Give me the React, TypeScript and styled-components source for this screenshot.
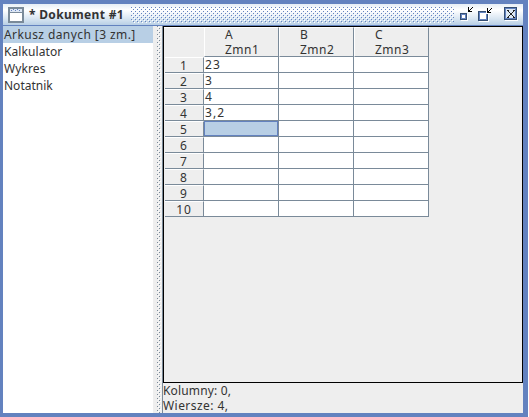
import React from "react";
import styled, { createGlobalStyle } from "styled-components";

const GlobalStyle = createGlobalStyle`
  * { box-sizing: border-box; }
  body { margin: 0; background: #fff; overflow: hidden; }
`;

const Frame = styled.div`
  width: 528px;
  height: 417px;
  background: #6382bf;
  padding: 4px 5px 4px 3px;
  display: flex;
  flex-direction: column;
  font-family: "Noto Sans", "Open Sans", sans-serif;
  font-size: 12px;
  color: #333;
`;

const TitleBar = styled.header`
  height: 22px;
  flex: none;
  display: flex;
  align-items: flex-start;
  background: linear-gradient(#e6eef6 0, #fff 6px, #dce8f3 14px, #b8cfe5 21px);
  border-bottom: 1px solid #6382bf;
`;

const DocIcon = styled.svg`
  flex: none;
  margin: 3px 0 0 5px;
`;

const Title = styled.h1`
  width: 107px;
  flex: none;
  margin: 0;
  padding-left: 5px;
  font-size: 12px;
  line-height: 21px;
  font-weight: 700;
  letter-spacing: 0.32px;
  white-space: pre;
`;

const DotField = styled.svg<{ $top?: number }>`
  flex: none;
  display: block;
  margin-top: ${(p) => p.$top ?? 0}px;
`;

const Controls = styled.svg`
  flex: none;
  display: block;
`;

const Body = styled.div`
  flex: 1;
  min-height: 0;
  display: flex;
  background: #eee;
`;

const Sidebar = styled.ul`
  width: 150px;
  flex: none;
  margin: 0;
  padding: 0;
  list-style: none;
  background: #fff;
`;

const SideItem = styled.li<{ $selected?: boolean; $spacing: number }>`
  height: 17px;
  line-height: 17px;
  padding-left: 1px;
  white-space: nowrap;
  letter-spacing: ${(p) => p.$spacing}px;
  background: ${(p) => (p.$selected ? "#b8cfe5" : "transparent")};
`;

const Splitter = styled.div`
  width: 10px;
  flex: none;
  padding-left: 4px;
  border-right: 1px solid #7a8a99;
`;

const Main = styled.main`
  width: 360px;
  display: flex;
  flex-direction: column;
`;

const Viewport = styled.div`
  height: 357px;
  flex: none;
  border: 1px solid #000;
  background: #eee;
`;

const Sheet = styled.div`
  width: 265px;
  display: grid;
  grid-template-columns: 40px repeat(3, 75px);
  grid-template-rows: 30px repeat(10, 16px);
`;

const Corner = styled.div`
  border-top: 1px solid #fff;
`;

const ColumnHead = styled.div`
  display: flow-root;
  border: 1px solid;
  border-color: #fff #7a8a99 #7a8a99 #fff;
  padding-left: 20px;
`;

const ColumnLabel = styled.div`
  margin-top: -1px;
  line-height: 15px;
  letter-spacing: 0.5px;
  white-space: pre;
`;

const RowHead = styled.div`
  margin-left: 1px;
  border: solid;
  border-width: 1px 1px 1px 0;
  border-color: #fff #7a8a99 #7a8a99;
  text-align: center;
  line-height: 15px;
  letter-spacing: 0.9px;
`;

const Cell = styled.div<{ $active?: boolean }>`
  background: ${(p) => (p.$active ? "#b8cfe5" : "#fff")};
  border-right: 1px solid #7a8a99;
  border-bottom: 1px solid #7a8a99;
  box-shadow: ${(p) => (p.$active ? "inset 0 0 0 1px #6382bf" : "none")};
  padding-left: 1px;
  line-height: 15px;
  letter-spacing: 1.1px;
`;

const Status = styled.footer`
  line-height: 15px;
  white-space: pre;
`;

const StatusLine = styled.div<{ $spacing: number }>`
  letter-spacing: ${(p) => p.$spacing}px;
`;

type DotsProps = { id: string; width: number; height: number; color: string; top?: number };

function Dots({ id, width, height, color, top }: DotsProps) {
  return (
    <DotField $top={top} width={width} height={height} shapeRendering="crispEdges">
      <defs>
        <pattern id={id} width="4" height="4" patternUnits="userSpaceOnUse">
          <path fill="#fff" d="M1 1h1v1H1zM3 3h1v1H3z" />
          <path fill={color} d="M0 0h1v1H0zM2 2h1v1H2z" />
        </pattern>
      </defs>
      <rect width={width} height={height} fill={`url(#${id})`} />
    </DotField>
  );
}

const ITEMS = [
  { label: "Arkusz danych [3 zm.]", spacing: 0.42 },
  { label: "Kalkulator", spacing: 0.08 },
  { label: "Wykres", spacing: 0.1 },
  { label: "Notatnik", spacing: 0 },
];
const COLUMNS = [["A", "Zmn1"], ["B", "Zmn2"], ["C", "Zmn3"]];
const VALUES = ["23", "3", "4", "3,2"];

export default function App() {
  return (
    <Frame>
      <GlobalStyle />
      <TitleBar>
        <DocIcon width="16" height="16" shapeRendering="crispEdges">
          <rect x="1" y="1" width="14" height="14" fill="#fff" stroke="#7a8a99" strokeWidth="2" />
          <rect x="2" y="5" width="12" height="1" fill="#7a8a99" />
          <rect x="2" y="2" width="12" height="3" fill="#dce6f5" />
          <path fill="#6382bf" d="M3 3h1v1H3zM5 2h1v1H5zM7 3h1v1H7zM9 2h1v1H9zM11 3h1v1h-1z" />
        </DocIcon>
        <Title>* Dokument #1</Title>
        <Dots id="title-dots" width={323} height={16} color="#6382bf" top={3} />
        <Controls width="66" height="21" shapeRendering="crispEdges">
          <path fill="#fff" d="M7 10h7v7H7zM25 8h10v10H25zM51 4h13v13H51z" />
          <path fill="none" stroke="#334e73" d="M6.500 9.500h6v6h-6z" />
          <path fill="none" stroke="#6382bf" d="M7.500 10.500h4v4h-4z" />
          <path fill="none" stroke="#334e73" d="M24.500 7.500h9v9h-9z" />
          <path fill="none" stroke="#6382bf" d="M25.500 8.500h7v7h-7z" />
          <path fill="#fff" d="M32 5h3v5h-3z" />
          <path fill="#000" d="M14 3h1v4h3v1h-4zM15 6h1v1h-1zM16 5h1v1h-1zM17 4h1v1h-1zM18 3h1v1h-1z" />
          <path fill="#000" d="M33 4h1v4h3v1h-4zM34 7h1v1h-1zM35 6h1v1h-1zM36 5h1v1h-1zM37 4h1v1h-1z" />
          <path fill="none" stroke="#334e73" d="M50.500 3.500h12v12h-12z" />
          <path fill="#dce8f3" stroke="#6382bf" d="M51.500 4.500h10v10h-10z" />
          <g fill="#222">
            {Array.from({ length: 8 }, (_, i) => (
              <React.Fragment key={i}>
                <rect x={53 + i} y={6 + i} width="1" height="1" />
                <rect x={60 - i} y={6 + i} width="1" height="1" />
              </React.Fragment>
            ))}
            <path d="M54 6h1v1h-1zM59 6h1v1h-1zM54 13h1v1h-1zM59 13h1v1h-1z" />
          </g>
        </Controls>
      </TitleBar>
      <Body>
        <Sidebar>
          {ITEMS.map((item, i) => (
            <SideItem key={item.label} $selected={i === 0} $spacing={item.spacing}>{item.label}</SideItem>
          ))}
        </Sidebar>
        <Splitter>
          <Dots id="split-dots" width={4} height={387} color="#7a8a99" />
        </Splitter>
        <Main>
          <Viewport>
            <Sheet>
              <Corner />
              {COLUMNS.map(([letter, name]) => (
                <ColumnHead key={letter}>
                  <ColumnLabel>{letter + "\n" + name}</ColumnLabel>
                </ColumnHead>
              ))}
              {Array.from({ length: 10 }, (_, r) => (
                <React.Fragment key={r}>
                  <RowHead>{r + 1}</RowHead>
                  <Cell $active={r === 4}>{VALUES[r]}</Cell>
                  <Cell />
                  <Cell />
                </React.Fragment>
              ))}
            </Sheet>
          </Viewport>
          <Status>
            <StatusLine $spacing={0.15}>Kolumny: 0,</StatusLine>
            <StatusLine $spacing={0.45}>Wiersze: 4,</StatusLine>
          </Status>
        </Main>
      </Body>
    </Frame>
  );
}
